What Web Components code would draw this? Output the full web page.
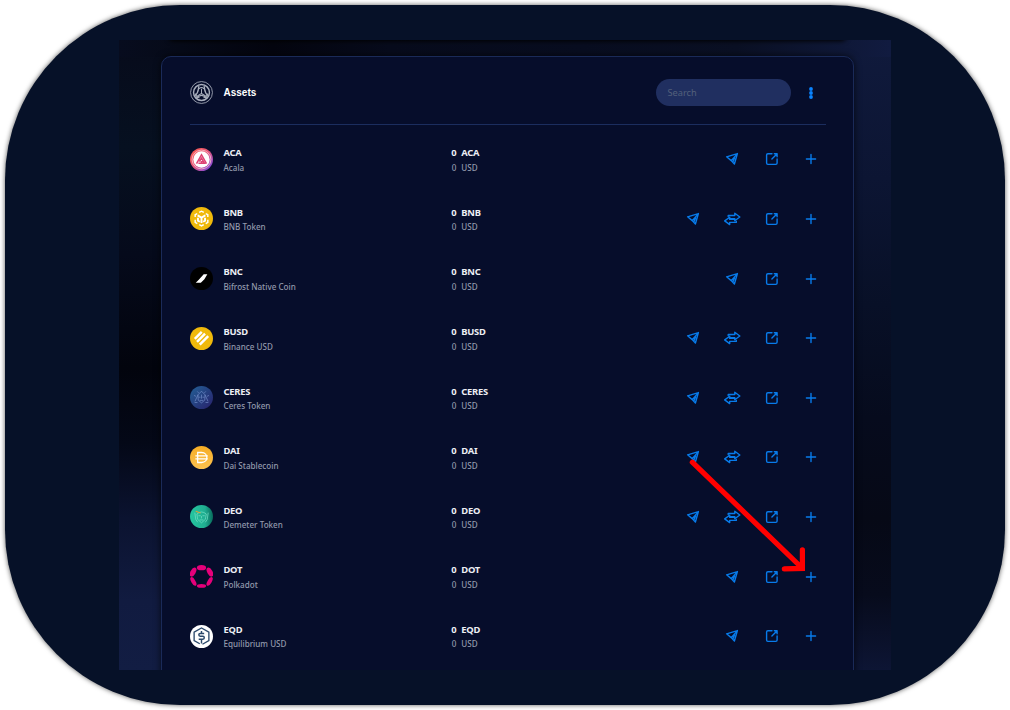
<!DOCTYPE html>
<html lang="en">
<head>
<meta charset="utf-8">
<title>Assets</title>
<style>
html,body{margin:0;background:#fff}
body{width:1010px;height:710px;overflow:hidden;font-family:"Noto Sans","Open Sans",sans-serif}
</style>
</head>
<body>
<wallet-frame>
  <assets-card></assets-card>
  <pointer-arrow slot="overlay"></pointer-arrow>
</wallet-frame>
<script>
const define = (name, html, setup) => customElements.define(name, class extends HTMLElement {
  constructor() {
    super();
    this.attachShadow({ mode: 'open' });
  }
  connectedCallback() {
    this.shadowRoot.innerHTML = typeof html === 'function' ? html(this) : html;
    if (setup) setup(this);
  }
});

define('wallet-frame', `
<style>
:host{display:block;position:relative;box-sizing:border-box;width:1010px;height:710px;padding:5px}
.frame{box-sizing:border-box;width:1000px;height:700px;padding:35px 114px;border-radius:175px;background:#061128;box-shadow:0 0 5px rgba(0,0,0,.65)}
.view{box-sizing:border-box;width:772px;height:630px;padding:16px 37px 0 42px;overflow:hidden;position:relative;
background:
linear-gradient(90deg,#070c1e 0,#060a18 8%,#04050f 20%,#070b1c 35%,#080d20 60%,#0a1024 80%,#0f1838 94%,#111b40 100%) top/100% 17px no-repeat,
linear-gradient(180deg,#070b1b 0,#061020 17%,#050a1b 34%,#02040d 52%,#040817 64%,#0b1330 76%,#111b40 89%,#121d43 100%) left/60px 100% no-repeat,
linear-gradient(180deg,#101a3c 0,#0c1533 22%,#081027 42%,#060b1d 60%,#060916 76%,#070b1c 88%,#0d1534 100%) right/60px 100% no-repeat,
#050a1b}
.view::before{content:"";position:absolute;left:50px;right:45px;top:-10px;height:10px;border-radius:8px;box-shadow:0 0 5px 1px #000}
</style>
<div class="frame"><div class="view"><slot></slot></div></div>
<slot name="overlay"></slot>`);

define('pointer-arrow', `
<style>
:host{display:block;position:absolute;left:680px;top:450px;width:140px;height:130px;pointer-events:none}
svg{display:block}
</style>
<svg width="140" height="130" fill="none" stroke="#f00" stroke-width="5.2" stroke-linecap="round" stroke-linejoin="miter"><path d="M12.3 12.2 121 117M122.4 99.8V118.4L104.3 118.9"/></svg>`);

const glyphs = {
  send: '<path d="M1.6 4.8 12.4 1.6 9.4 12 6.2 8.6Z M6.2 8.6 12.4 1.6 M8 9.6 9.6 5.9"/>',
  swap: '<path d="M4.2 4.6V3.5H10.8V1.3L15.8 5 10.8 8.7V6.6H6.6M12.3 9.4V10.4H5.7V12.6L.7 8.9 5.7 5.2V7.4H9.9"/>',
  open: '<path d="M7 1.7H2.9Q1.6 1.7 1.6 3v8.1Q1.6 12.4 2.9 12.4h7.9Q12.1 12.4 12.1 11.1V7M9.3 1.7h2.8V4.7M11.9 1.9 6.9 7"/>',
  add: '<path d="M7 2.4v9.2M2.4 7h9.2"/>'
};
define('action-icon', el => {
  const k = el.getAttribute('kind'), w = k === 'swap' ? 17 : 14;
  return `
<style>
:host{display:flex;align-items:center;justify-content:center;width:39.3px;height:20px}
svg{display:block;fill:none;stroke:#087bea;stroke-width:1.4;stroke-linejoin:round;stroke-linecap:round}
</style>
<svg width="${w}" height="14" viewBox="0 0 ${w} 14">${glyphs[k]}</svg>`;
});

const logos = {
  SORA: '<g fill="none" stroke="#a9afbd"><circle cx="12" cy="12" r="11.4" stroke-width=".9"/><circle cx="12" cy="12" r="8.3" stroke-width="1.5"/><path d="M9.3 5.3C8.2 10 9.3 12.4 5 15.2M14.7 5.3C15.8 10 14.7 12.4 19 15.2M6.5 18C10 14 14 14 17.5 18" stroke-width="1.5"/><path d="M12 8v5l-5 3M12 13l5 3M9.5 8.2Q12 5.5 14.5 8.2M6 13Q6 17 10 17.5M18 13Q18 17 14 17.5" stroke-width="1.1"/></g>',
  ACA: '<defs><linearGradient id="g" x1="0" y1="0" x2="1" y2="1"><stop offset="0" stop-color="#ff5b48"/><stop offset=".5" stop-color="#e4577f"/><stop offset="1" stop-color="#6547f5"/></linearGradient></defs><circle cx="12" cy="12" r="12" fill="url(#g)"/><circle cx="12" cy="12" r="9.8" fill="none" stroke="#f7c4d0" stroke-width=".8"/><circle cx="12" cy="12" r="8.5" fill="#fff"/><path d="M6.8 16.2 12 7l5.2 9.2M8.8 15.9H15L12 10.6 9.8 14.3M11.2 14.3h2" fill="none" stroke="#dd4274" stroke-width="1.6"/>',
  BNB: '<circle cx="12" cy="12" r="12" fill="#f0b90b"/><g fill="none" stroke="#fff" stroke-width="1.5"><path d="M9.6 5.7 12 4.4l2.4 1.3M5.4 10.4V8l2.2-1.2M18.6 10.4V8l-2.2-1.2M5.4 13.3v2.8l2.2 1.3M18.6 13.3v2.8l-2.2 1.3M9.7 18.5l2.3 1.3 2.3-1.3"/><path d="M8 8.7 12 11l4-2.3M12 11v5.8M8.3 11.2v3l2 1.2M15.7 11.2v3l-2 1.2" stroke-width="2"/></g>',
  BNC: '<circle cx="12" cy="12" r="12" fill="#000"/><path d="M6 16.4 9.4 13.1 14.3 7.5H18.1L15 12.9 11.3 16.4Z" fill="#fff"/>',
  BUSD: '<circle cx="12" cy="12" r="12" fill="#f0b90b"/><g stroke="#fff" stroke-width="2.6"><path d="M5 12.4 12.3 5.1M7.3 15.4 15.7 7M10.2 18.4 19 9.6"/></g>',
  CERES: '<defs><linearGradient id="g" x1="0" y1="0" x2="1" y2="1"><stop stop-color="#236096"/><stop offset="1" stop-color="#28206b"/></linearGradient></defs><circle cx="12" cy="12" r="12" fill="url(#g)"/><g fill="none" stroke="#829bd7" stroke-width=".8" opacity=".75"><path d="M5.2 16 8.3 9.2 12 5.4 15.7 9.2 18.8 16M8.3 9.2 8.6 14.8 12 17.6 15.4 14.8 15.7 9.2M9 11.7h2M13 11.7h2M10.2 15h3.6M12 9v4.2M4.2 9.8l2 1M4.8 17.2h3M19.8 9.8l-2 1M19.2 17.2h-3M7.6 5.7l1.4 1.5M16.4 5.7 15 7.2"/></g>',
  DAI: '<defs><linearGradient id="g" x1="0" y1="0" x2="0" y2="1"><stop stop-color="#f6ad25"/><stop offset="1" stop-color="#fbc150"/></linearGradient></defs><circle cx="12" cy="12" r="12" fill="url(#g)"/><path d="M8 6.8h4.1c7.3 0 7.3 10.4 0 10.4H8ZM5.6 10.4h13M5.6 13.5h13" fill="none" stroke="#fff" stroke-width="1.35"/>',
  DEO: '<defs><linearGradient id="g" x1="0" y1="0" x2="1" y2="0"><stop stop-color="#25c6a0"/><stop offset=".65" stop-color="#20ae91"/><stop offset="1" stop-color="#086b5b"/></linearGradient></defs><circle cx="12" cy="12" r="12" fill="url(#g)"/><g fill="none" stroke="#72dfc5" stroke-width=".75"><path d="M7.2 9.4Q12 5.2 17 9.4L16 15 12 18.6 8 15ZM5 8l1 7 2 3M19 8l-1 7-2 3M8.8 11.2h2.4M13 11.2h2.4M12 11.5v2.5M10 15.6h4"/><path d="M6 6.6 11 8.4" stroke="#d4a340" stroke-width="1.1"/></g>',
  DOT: '<g fill="#e6007a"><ellipse cx="12" cy="2.8" rx="4.8" ry="2.8"/><ellipse cx="12" cy="21.8" rx="4.8" ry="2"/><ellipse cx="3.2" cy="7.4" rx="5.1" ry="2.7" transform="rotate(-60 3.2 7.4)"/><ellipse cx="20.8" cy="7.4" rx="5.1" ry="2.7" transform="rotate(60 20.8 7.4)"/><ellipse cx="3.5" cy="17.2" rx="5" ry="2.2" transform="rotate(60 3.5 17.2)"/><ellipse cx="20.5" cy="17.2" rx="5" ry="2.2" transform="rotate(-60 20.5 17.2)"/></g>',
  EQD: '<circle cx="12" cy="12" r="12" fill="#fff"/><g fill="none" stroke="#2b496b"><path d="M10.2 19.6 4.3 16.3V7.5L12 3.1l7.7 4.4v8.8L13 20.1" stroke-width="1.4"/><path d="M14.8 8.8H10.6q-1.4 0-1.4 1.5t1.4 1.5h2.9q1.4 0 1.4 1.5t-1.4 1.5H9.1M12 6.2v2.6M12 14.8v4.6" stroke-width="1.5"/></g>'
};
define('token-logo', el => `
<style>:host{display:block;width:23px;height:23px;flex:none}svg{display:block}</style>
<svg width="23" height="23" viewBox="0 0 24 24">${logos[el.getAttribute('token')]}</svg>`);

define('asset-row', el => {
  const t = el.getAttribute('ticker');
  const acts = (el.hasAttribute('swap') ? ['send', 'swap', 'open', 'add'] : ['send', 'open', 'add']);
  return `
<style>
:host{display:grid;grid-template-columns:33.5px 223px 10px 1fr auto;align-items:center;height:59.6px;margin-right:-4.6px}
.col{display:grid;grid-template-rows:14.5px 14.5px;align-items:center;line-height:14px;white-space:nowrap;padding-top:2.2px}
b{font-size:9.4px;font-weight:700;color:#eceef4;letter-spacing:-.25px}
span{font-size:8.1px;font-weight:500;color:#9299ab}
.n{justify-items:end}
.n b{letter-spacing:0}
.c{padding-left:4.8px}
.acts{display:flex}
</style>
<token-logo token="${t}"></token-logo>
<div class="col"><b>${t}</b><span>${el.getAttribute('name')}</span></div>
<div class="col n"><b>0</b><span>0</span></div>
<div class="col c"><b>${t}</b><span>USD</span></div>
<div class="acts">${acts.map(a => `<action-icon kind="${a}"></action-icon>`).join('')}</div>`;
});

define('search-field', `
<style>
:host{display:flex;box-sizing:border-box;align-items:center;width:135px;height:27px;padding:0 11.5px;border-radius:14px;background:#202f60;color:#53607b;font-size:9.2px}
</style><span>Search</span>`);

const assets = [
  ['ACA', 'Acala', 0], ['BNB', 'BNB Token', 1], ['BNC', 'Bifrost Native Coin', 0],
  ['BUSD', 'Binance USD', 1], ['CERES', 'Ceres Token', 1], ['DAI', 'Dai Stablecoin', 1],
  ['DEO', 'Demeter Token', 1], ['DOT', 'Polkadot', 0], ['EQD', 'Equilibrium USD', 0]
];
define('assets-card', `
<style>
:host{display:block;position:relative;box-sizing:border-box;width:693px;height:640px;padding:0 27px 0 28px;border:1px solid #1a2a58;border-radius:10px;background:#060d2b;box-shadow:0 0 7px rgba(0,0,0,.7)}
header{display:flex;align-items:center;border-bottom:1px solid #1b2d5e;padding-top:4.6px;box-sizing:border-box;height:68px}
h1{margin:1px auto 0 10.5px;font:700 10px/14px "Liberation Sans",Arial,sans-serif;color:#fff}
svg{display:block;margin:0 11px 0 16px}
.list{padding-top:4.6px}
</style>
<header><token-logo token="SORA"></token-logo><h1>Assets</h1><search-field></search-field>
<svg width="8" height="14" fill="#0a84ff"><circle cx="4" cy="3" r="1.9"/><circle cx="4" cy="7" r="1.9"/><circle cx="4" cy="11" r="1.9"/></svg></header>
<div class="list">${assets.map(([t, n, s]) => `<asset-row ticker="${t}" name="${n}"${s ? ' swap' : ''}></asset-row>`).join('')}</div>`);
</script>
</body>
</html>
